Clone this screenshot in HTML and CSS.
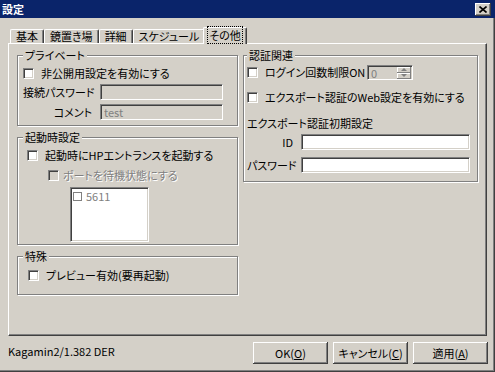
FILE: index.html
```html
<!DOCTYPE html>
<html lang="ja">
<head>
  <meta charset="UTF-8">
  <title>設定</title>
  <link rel="stylesheet" href="styles.css">
</head>
<body>
  <div class="window">
    <div class="titlebar">
      <span class="title">設定</span>
      <span class="close-btn">
        <svg width="8" height="7" viewBox="0 0 8 7"><path d="M0.5 0.5 L7.5 6.5 M7.5 0.5 L0.5 6.5" stroke="#000" stroke-width="1.6"/></svg>
      </span>
    </div>

    <div class="tabs">
      <div class="tab">基本</div>
      <div class="tab">鏡置き場</div>
      <div class="tab">詳細</div>
      <div class="tab">スケジュール</div>
      <div class="tab tab-active"><span class="focus">その他</span></div>
    </div>

    <div class="panel">
      <div class="col">
        <fieldset class="group group-private">
          <legend>プライベート</legend>
          <div class="check-row">
            <span class="check"></span>
            <span>非公開用設定を有効にする</span>
          </div>
          <div class="field-row">
            <label class="field-label">接続パスワード</label>
            <input type="text" class="input" disabled>
          </div>
          <div class="field-row">
            <label class="field-label">コメント</label>
            <input type="text" class="input" value="test" disabled>
          </div>
        </fieldset>

        <fieldset class="group group-startup">
          <legend>起動時設定</legend>
          <div class="check-row">
            <span class="check"></span>
            <span>起動時にHPエントランスを起動する</span>
          </div>
          <div class="check-row sub-row disabled">
            <span class="check"></span>
            <span>ポートを待機状態にする</span>
          </div>
          <div class="listbox">
            <div class="list-item">
              <span class="check check-small"></span>
              <span>5611</span>
            </div>
          </div>
        </fieldset>

        <fieldset class="group group-special">
          <legend>特殊</legend>
          <div class="check-row">
            <span class="check"></span>
            <span>プレビュー有効(要再起動)</span>
          </div>
        </fieldset>
      </div>

      <div class="col">
        <fieldset class="group group-auth">
          <legend>認証関連</legend>
          <div class="check-row login-row">
            <span class="check"></span>
            <span class="login-label">ログイン回数制限ON</span>
            <div class="spin">
              <span class="spin-value">0</span>
              <span class="spin-buttons">
                <span class="spin-btn"><i class="arrow-up"></i></span>
                <span class="spin-btn"><i class="arrow-down"></i></span>
              </span>
            </div>
          </div>
          <div class="check-row web-row">
            <span class="check"></span>
            <span>エクスポート認証のWeb設定を有効にする</span>
          </div>
          <div class="section-label">エクスポート認証初期設定</div>
          <div class="field-row id-row">
            <label class="field-label">ID</label>
            <input type="text" class="input input-white">
          </div>
          <div class="field-row pass-row">
            <label class="field-label">パスワード</label>
            <input type="text" class="input input-white">
          </div>
        </fieldset>
      </div>
    </div>

    <div class="footer">
      <span class="version">Kagamin2/1.382 DER</span>
      <div class="buttons">
        <button class="btn">OK(<u>O</u>)</button>
        <button class="btn">キャンセル(<u>C</u>)</button>
        <button class="btn">適用(<u>A</u>)</button>
      </div>
    </div>
  </div>
</body>
</html>
```

FILE: styles.css
```css
* {
  box-sizing: border-box;
  margin: 0;
  padding: 0;
}

body {
  width: 495px;
  height: 372px;
  overflow: hidden;
  background: #d4d0c8;
  font-family: "Noto Sans CJK JP", "Noto Sans", sans-serif;
  font-size: 11px;
  line-height: 13px;
  font-feature-settings: "palt";
  color: #000;
}

.window {
  width: 495px;
  height: 372px;
  display: flex;
  flex-direction: column;
  box-shadow: inset -1px -1px 0 #404040, inset -2px -2px 0 #808080;
}

/* title bar */
.titlebar {
  height: 18px;
  flex: none;
  background: #0a246a;
  color: #fff;
  display: flex;
  align-items: center;
  justify-content: space-between;
  padding: 0 4px 0 2px;
}

.title {
  font-weight: bold;
}

.close-btn {
  width: 16px;
  height: 13px;
  background: #d4d0c8;
  display: flex;
  align-items: center;
  justify-content: center;
  box-shadow: inset -1px -1px 0 #404040, inset 1px 1px 0 #fff, inset -2px -2px 0 #808080;
}

/* tabs */
.tabs {
  position: relative;
  z-index: 1;
  height: 16px;
  flex: none;
  margin: 9px 0 0 10px;
  display: flex;
  align-items: flex-end;
}

.tab {
  height: 14px;
  padding: 0 5px;
  border: 1px solid #fff;
  border-right-color: #404040;
  border-bottom: 0;
  border-radius: 2px 2px 0 0;
  box-shadow: inset -1px 0 0 #808080;
  line-height: 13px;
}

.tab-active {
  height: 17px;
  margin: 0 -2px -1px;
  padding: 1px 4px 0;
  background: #d4d0c8;
}

.focus {
  outline: 1px dotted #000;
  padding: 0 1px;
}

/* tab page */
.panel {
  margin-left: 8px;
  width: 479px;
  height: 293px;
  flex: none;
  border: 1px solid;
  border-color: #fff #404040 #404040 #fff;
  box-shadow: inset -1px -1px 0 #808080;
  display: grid;
  grid-template-columns: 221px 235px;
  column-gap: 5px;
  align-items: start;
  padding: 5px 0 0 8px;
}

.col {
  display: flex;
  flex-direction: column;
  gap: 5px;
}

.group {
  min-width: 0;
  border: 1px solid #808080;
  box-shadow: 1px 1px 0 #fff, inset 1px 1px 0 #fff;
  padding: 0 5px;
  display: flex;
  flex-direction: column;
}

.group legend {
  padding: 0 2px;
  background: #d4d0c8;
  line-height: 13px;
}

.check-row {
  display: flex;
  align-items: center;
  gap: 7px;
  height: 14px;
  white-space: nowrap;
}

.check {
  flex: none;
  width: 11px;
  height: 11px;
  background: #fff;
  border: 1px solid;
  border-color: #808080 #fff #fff #808080;
  box-shadow: inset 1px 1px 0 #404040, inset -1px -1px 0 #d4d0c8;
}

.disabled {
  color: #808080;
  text-shadow: 1px 1px 0 #fff;
}

.disabled .check {
  background: #d4d0c8;
}

.field-row {
  display: flex;
  align-items: center;
  gap: 8px;
  height: 16px;
}

.field-label {
  text-align: right;
  white-space: nowrap;
}

.input {
  height: 16px;
  border: 1px solid;
  border-color: #808080 #fff #fff #808080;
  box-shadow: inset 1px 1px 0 #404040, inset -1px -1px 0 #d4d0c8;
  background: #d4d0c8;
  color: #808080;
  padding: 0 3px;
  font: inherit;
  line-height: 14px;
  outline: none;
}

.input-white {
  background: #fff;
  color: #000;
}

/* プライベート */
.group-private {
  padding-top: 4px;
  padding-bottom: 5px;
  gap: 4px;
}

.group-private .field-label {
  width: 69px;
}

.group-private .input {
  width: 123px;
}

/* 起動時設定 */
.group-startup {
  padding: 4px 5px 2px 9px;
}

.group-startup legend {
  margin-left: -4px;
}

.sub-row {
  margin: 6px 0 0 21px;
  gap: 4px;
}

.listbox {
  margin: 5px 0 0 43px;
  width: 79px;
  height: 55px;
  background: #fff;
  border: 1px solid;
  border-color: #808080 #fff #fff #808080;
  box-shadow: inset 1px 1px 0 #404040, inset -1px -1px 0 #d4d0c8;
  padding: 2px 0 0 2px;
}

.list-item {
  display: flex;
  align-items: center;
  gap: 4px;
  color: #808080;
}

.check-small {
  width: 9px;
  height: 9px;
  border-color: #808080;
  box-shadow: none;
}

/* 特殊 */
.group-special {
  padding: 5px 5px 12px 10px;
}

.group-special legend {
  margin-left: -5px;
}

/* 認証関連 */
.group-auth {
  padding: 2px 5px 8px 3px;
}

.login-row {
  height: 16px;
}

.login-label {
  width: 95px;
}

.spin {
  width: 46px;
  height: 15px;
  display: flex;
  justify-content: space-between;
  border: 1px solid;
  border-color: #808080 #fff #fff #808080;
  box-shadow: inset 1px 1px 0 #404040;
  padding: 1px 1px 0 3px;
  color: #808080;
}

.spin-value {
  line-height: 12px;
}

.spin-buttons {
  width: 14px;
  display: flex;
  flex-direction: column;
}

.spin-btn {
  flex: 1;
  display: flex;
  align-items: center;
  justify-content: center;
  box-shadow: inset -1px -1px 0 #808080, inset 1px 1px 0 #fff;
}

.arrow-up,
.arrow-down {
  width: 0;
  height: 0;
  border-left: 3px solid transparent;
  border-right: 3px solid transparent;
}

.arrow-up {
  border-bottom: 3px solid #808080;
}

.arrow-down {
  border-top: 3px solid #808080;
}

.web-row {
  margin-top: 10px;
}

.section-label {
  margin-top: 12px;
  height: 14px;
  line-height: 14px;
}

.group-auth .field-label {
  width: 46px;
}

.group-auth .input {
  width: 169px;
}

.id-row {
  margin-top: 4px;
}

.pass-row {
  margin-top: 7px;
}

/* footer */
.footer {
  display: flex;
  justify-content: space-between;
  align-items: center;
  margin-top: 6px;
  padding: 0 7px 0 8px;
}

.version {
  margin-top: -3px;
}

.buttons {
  display: flex;
  gap: 5px;
}

.btn {
  width: 75px;
  height: 22px;
  border: none;
  background: #d4d0c8;
  font: inherit;
  color: #000;
  box-shadow: inset -1px -1px 0 #404040, inset 1px 1px 0 #fff, inset -2px -2px 0 #808080;
}
```
